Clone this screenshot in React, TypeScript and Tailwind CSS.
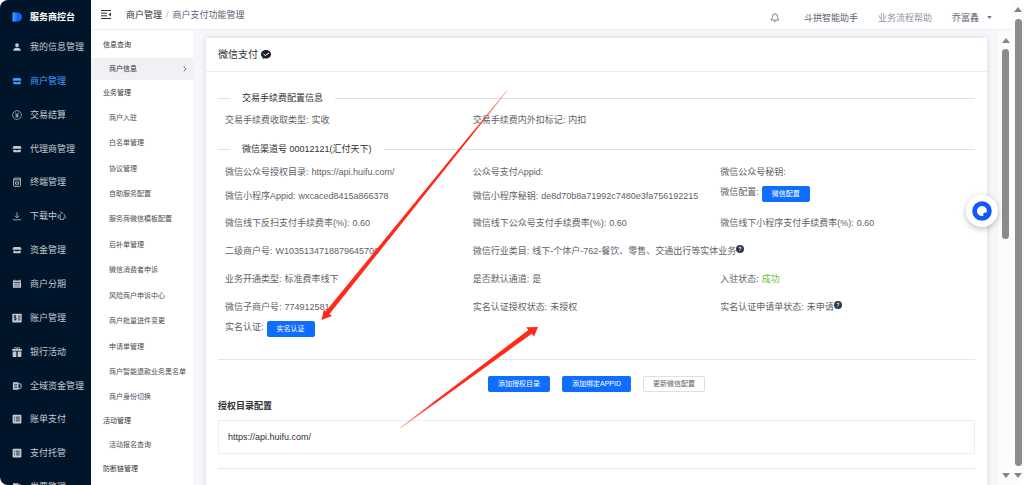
import type { ReactNode } from 'react';
import { BsGiftFill, BsPersonFill, BsQuestionCircleFill } from 'react-icons/bs';
import { Bell, ChevronRight } from 'lucide-react';

function ShopIcon() {
  return (
    <svg viewBox="0 0 16 16" className="w-2.5 h-2.5" fill="currentColor">
      <path d="M4 3h8a3 3 0 0 1 3 3v1.500H1V6a3 3 0 0 1 3-3z" />
      <path d="M2 9h3l1.500 1h3L11 9h3v3a1 1 0 0 1-1 1H3a1 1 0 0 1-1-1z" />
    </svg>
  );
}

function YuanIcon() {
  return (
    <svg viewBox="0 0 16 16" className="w-2.5 h-2.5" fill="none" stroke="currentColor" strokeWidth="1.1">
      <circle cx="8" cy="8" r="7" />
      <path d="m5 4 3 4 3-4M8 8v4.500M5.200 8.200h5.600M5.200 10.300h5.600" />
    </svg>
  );
}

function TerminalIcon() {
  return (
    <svg viewBox="0 0 16 16" className="w-2.5 h-2.5" fill="none" stroke="currentColor" strokeWidth="1.4">
      <path d="M2.500 4.500h11v9A1.500 1.500 0 0 1 12 15H4a1.500 1.500 0 0 1-1.500-1.500zM2.500 4.500 4 1.700h9.500v2.800M5.500 8h5v3.500h-5z" />
    </svg>
  );
}

function DownloadIcon() {
  return (
    <svg viewBox="0 0 16 16" className="w-2.5 h-2.5" fill="none" stroke="currentColor" strokeWidth="1.2">
      <path d="M8 2v9M4.500 7.500 8 11l3.500-3.500M1.500 14h13" />
    </svg>
  );
}

function CalendarIcon() {
  return (
    <svg viewBox="0 0 16 16" className="w-2.5 h-2.5">
      <path d="M1.500 2.500h13V14h-13z" fill="currentColor" />
      <path d="M2.500 5.500h11M4 8.200h2M7 8.200h2M10 8.200h2M4 11h2M7 11h2M10 11h2" stroke="#001529" strokeWidth="1.1" />
      <path d="M4.500 1v3M11.500 1v3" stroke="currentColor" strokeWidth="1.300" />
    </svg>
  );
}

function AccountIcon() {
  return (
    <svg viewBox="0 0 16 16" className="w-2.5 h-2.5">
      <rect x="0.5" y="1" width="15" height="14" rx="1" fill="currentColor" />
      <path d="M6.500 4.500h-3v3h3v3h-3M5 3v9.500M9.500 5h4M9.500 8h4M9.500 11h4" fill="none" stroke="#001529" strokeWidth="1.2" />
    </svg>
  );
}

function FundsIcon() {
  return (
    <svg viewBox="0 0 16 16" className="w-2.5 h-2.5">
      <path d="M1.500 2h9v12h-9z" fill="currentColor" />
      <path d="M10.500 4.500h3a1 1 0 0 1 1 1V10a2 2 0 0 1-2 2h-2" fill="none" stroke="currentColor" strokeWidth="1.6" />
      <path d="M3.500 5.500h5M3.500 8h5M3.500 10.500h5" stroke="#001529" />
    </svg>
  );
}

function BillIcon() {
  return (
    <svg viewBox="0 0 16 16" className="w-2.5 h-2.5">
      <rect x="1" y="1" width="14" height="14" rx="1.5" fill="currentColor" />
      <path d="M3.500 5H5M6.500 5h6M3.500 8H5M6.500 8h6M3.500 11H5M6.500 11h6" stroke="#001529" strokeWidth="1.3" />
    </svg>
  );
}

function LogoIcon() {
  return (
    <svg viewBox="0 0 20 20" className="w-2.5 h-2.5">
      <path d="M1 1h5v18H1z" fill="#38a3ff" />
      <path d="M4 1h7a9 9 0 0 1 0 18H6l5-9z" fill="#1463ff" />
      <path d="M4 1h3l4 9-4 9H4z" fill="#1f86ff" />
    </svg>
  );
}

function Triangle({ down = false }: { down?: boolean }) {
  return (
    <svg viewBox="0 0 8 5" className="w-2 h-[5px] shrink-0" fill="#858585">
      <path d={down ? 'M0 0h8L4 5z' : 'M0 5h8L4 0z'} />
    </svg>
  );
}

const mainNav: { label: string; icon: ReactNode; active?: boolean }[] = [
  { label: '我的信息管理', icon: <BsPersonFill className="w-2.5 h-2.5" /> },
  { label: '商户管理', icon: <ShopIcon />, active: true },
  { label: '交易结算', icon: <YuanIcon /> },
  { label: '代理商管理', icon: <ShopIcon /> },
  { label: '终端管理', icon: <TerminalIcon /> },
  { label: '下载中心', icon: <DownloadIcon /> },
  { label: '资金管理', icon: <ShopIcon /> },
  { label: '商户分期', icon: <CalendarIcon /> },
  { label: '账户管理', icon: <AccountIcon /> },
  { label: '银行活动', icon: <BsGiftFill className="w-2.5 h-2.5" /> },
  { label: '全域资金管理', icon: <FundsIcon /> },
  { label: '账单支付', icon: <BillIcon /> },
  { label: '支付托管', icon: <BillIcon /> },
  { label: '发票管理', icon: <FundsIcon /> },
];

const businessNav = [
  '商户入驻',
  '白名单管理',
  '协议管理',
  '自助服务配置',
  '服务商微信模板配置',
  '后补单管理',
  '微信消费者申诉',
  '风险商户申诉中心',
  '商户批量进件变更',
  '申请单管理',
  '商户智能退款业务黑名单',
  '商户身份切换',
];

function Sidebar() {
  return (
    <aside className="w-[91px] shrink-0 bg-[#001529] text-[#c3cad2] text-[9px] leading-3">
      <div className="flex items-center gap-2 h-[30px] pl-3 pt-1 font-bold text-white">
        <LogoIcon />
        <span>服务商控台</span>
      </div>
      <nav className="flex flex-col h-[474px]">
        {mainNav.map((item) => (
          <a
            key={item.label}
            href="#"
            className={`flex flex-1 items-center gap-2 pl-3 whitespace-nowrap ${item.active ? 'text-[#409eff]' : ''}`}
          >
            {item.icon}
            {item.label}
          </a>
        ))}
      </nav>
    </aside>
  );
}

function SubNav() {
  return (
    <aside className="w-[102px] shrink-0 bg-white text-[#303133] text-[7px] leading-[10px] whitespace-nowrap">
      <h2 className="flex items-center h-7 pl-3 pt-0.5">信息查询</h2>
      <a href="#" className="flex items-center justify-between h-[22px] pl-[18px] pr-1 bg-[#f0f0f5]">
        商户信息
        <ChevronRight className="w-2 h-2" />
      </a>
      <h2 className="flex items-center h-[25px] pl-3">业务管理</h2>
      <nav className="flex flex-col h-[305px] text-[#4a4c50]">
        {businessNav.map((label) => (
          <a key={label} href="#" className="flex flex-1 items-center pl-[18px]">
            {label}
          </a>
        ))}
      </nav>
      <h2 className="flex items-center h-[22px] pl-3">活动管理</h2>
      <a href="#" className="flex items-center h-[26px] pl-[18px] text-[#4a4c50]">
        活动报名查询
      </a>
      <h2 className="flex items-center h-[22px] pl-3">防断链管理</h2>
    </aside>
  );
}

function Header() {
  return (
    <header className="flex items-center justify-between h-[30px] pl-[10px] pr-5 bg-white border-b border-[#ebeef2] text-[9px] leading-3 text-[#5a6272] whitespace-nowrap">
      <div className="flex items-center">
        <button aria-label="收起菜单">
          <svg viewBox="0 0 20 18" className="w-2.5 h-[9px]" fill="none" stroke="#303133" strokeWidth="2">
            <path d="M0 1h20M0 6.300h12M0 11.600h12M0 17h20" />
            <path d="M20 5v8l-5-4z" fill="#303133" stroke="none" />
          </svg>
        </button>
        <nav className="flex gap-1 pl-[15px]">
          <a href="#" className="text-[#303133]">商户管理</a>
          <span className="text-[#b0b4bc]">/</span>
          <a href="#">商户支付功能管理</a>
        </nav>
      </div>
      <div className="flex items-center pt-1.5">
        <button aria-label="通知">
          <Bell className="w-2.5 h-2.5" />
        </button>
        <a href="#" className="pl-6">斗拱智能助手</a>
        <a href="#" className="pl-5 text-[#8c93a3]">业务流程帮助</a>
        <button className="flex items-center gap-2 pl-5">
          乔富鑫
          <svg viewBox="0 0 6 4" className="w-[5px] h-[3px]" fill="#6b7486">
            <path d="M0 0h6L3 4z" />
          </svg>
        </button>
      </div>
    </header>
  );
}

function SectionTitle({ children }: { children: ReactNode }) {
  return (
    <h3 className="flex items-center gap-3 h-4 text-[9px] leading-3 text-[#303133] whitespace-nowrap">
      <span className="w-3 h-px bg-[#dcdfe6]" />
      {children}
      <span className="flex-1 h-px bg-[#dcdfe6]" />
    </h3>
  );
}

function Field({ label, children, help = false }: { label: string; children?: ReactNode; help?: boolean }) {
  return (
    <div className="flex items-center gap-[3px]">
      <span>{label}:</span>
      <span className="flex">
        {children}
        {help && <BsQuestionCircleFill className="w-2 h-2 text-[#303a4a]" />}
      </span>
    </div>
  );
}

function PrimaryButton({ children }: { children: ReactNode }) {
  return (
    <button className="h-4 px-2.5 rounded-xs bg-[#0f6eff] text-white text-[7px] leading-3">{children}</button>
  );
}

function ButtonField({ label, button }: { label: string; button: string }) {
  return (
    <div className="flex items-start gap-[3px]">
      <span>{label}:</span>
      <PrimaryButton>{button}</PrimaryButton>
    </div>
  );
}

function ConfigCard() {
  return (
    <section className="h-[600px] bg-white rounded-xs shadow-[0_0_6px_rgba(0,0,0,0.12)]">
      <h2 className="flex items-center gap-[3px] h-[34px] px-3 border-b border-[#ebeef2] text-[10px] leading-3 text-[#303133]">
        微信支付
        <svg viewBox="0 0 20 18" className="w-2.5 h-[9px]">
          <path d="M10 0c5.500 0 10 3.800 10 8.500S15.500 17 10 17c-1 0-2-.1-3-.4L3.500 18v-3C1.300 13.500 0 11.200 0 8.500 0 3.800 4.500 0 10 0z" fill="#1d2129" />
          <path d="m5 8 3.500 3L16 6" fill="none" stroke="#fff" strokeWidth="2" />
        </svg>
      </h2>
      <div className="px-3 pt-[18px]">
        <SectionTitle>交易手续费配置信息</SectionTitle>
        <div className="grid grid-cols-3 h-7 px-[7px] text-[9px] leading-3 text-[#606266] whitespace-nowrap">
          <Field label="交易手续费收取类型">实收</Field>
          <Field label="交易手续费内外扣标记">内扣</Field>
        </div>
        <div className="pt-[7px]">
          <SectionTitle>微信渠道号 00012121(汇付天下)</SectionTitle>
        </div>
        <div className="px-[7px] pt-1 text-[9px] leading-3 text-[#606266] whitespace-nowrap">
          <div className="grid grid-cols-3 h-[22px]">
            <Field label="微信公众号授权目录">https://api.huifu.com/</Field>
            <Field label="公众号支付Appid" />
            <Field label="微信公众号秘钥" />
          </div>
          <div className="grid grid-cols-3 h-[26px]">
            <Field label="微信小程序Appid">wxcaced8415a866378</Field>
            <Field label="微信小程序秘钥">de8d70b8a71992c7480e3fa756192215</Field>
            <div className="pt-[3px]">
              <ButtonField label="微信配置" button="微信配置" />
            </div>
          </div>
          <div className="grid grid-cols-3 auto-rows-[28px]">
            <Field label="微信线下反扫支付手续费率(%)">0.60</Field>
            <Field label="微信线下公众号支付手续费率(%)">0.60</Field>
            <Field label="微信线下小程序支付手续费率(%)">0.60</Field>
            <Field label="二级商户号">W1035134718879645706</Field>
            <Field label="微信行业类目" help>线下-个体户-762-餐饮、零售、交通出行等实体业务</Field>
            <span />
            <Field label="业务开通类型">标准费率线下</Field>
            <Field label="是否默认通道">是</Field>
            <Field label="入驻状态">
              <span className="text-[#67c23a]">成功</span>
            </Field>
            <Field label="微信子商户号">774912581</Field>
            <Field label="实名认证授权状态">未授权</Field>
            <Field label="实名认证申请单状态" help>未申请</Field>
          </div>
          <ButtonField label="实名认证" button="实名认证" />
        </div>
        <hr className="mt-[22px] border-[#e4e7ed]" />
        <div className="flex justify-center gap-3 pt-4">
          <PrimaryButton>添加授权目录</PrimaryButton>
          <PrimaryButton>添加绑定APPID</PrimaryButton>
          <button className="h-4 px-[9px] rounded-xs border border-[#dcdfe6] text-[#606266] text-[7px] leading-3">
            更新微信配置
          </button>
        </div>
        <h3 className="pt-1.5 text-[9px] leading-4 font-bold text-[#303133]">授权目录配置</h3>
        <table className="w-full mt-1.5 border border-[#ebeef5] text-[9px] leading-3 text-[#303133]">
          <tbody>
            <tr>
              <td className="px-[9px] py-2.5">https://api.huifu.com/</td>
            </tr>
          </tbody>
        </table>
        <hr className="mt-[14px] border-[#e4e7ed]" />
      </div>
    </section>
  );
}

// Hand-drawn pointers laid over the form
function Arrows() {
  return (
    <svg viewBox="0 0 1024 485" className="absolute left-0 top-0 w-[1024px] h-[485px] pointer-events-none">
      <defs>
        <linearGradient id="fadeDown" gradientUnits="userSpaceOnUse" x1="507" y1="91" x2="470" y2="136">
          <stop offset="0" stopColor="#ff2a1a" stopOpacity="0.3" />
          <stop offset="1" stopColor="#ff2a1a" />
        </linearGradient>
        <linearGradient id="fadeUp" gradientUnits="userSpaceOnUse" x1="400" y1="428" x2="435" y2="402">
          <stop offset="0" stopColor="#ff2a1a" stopOpacity="0.3" />
          <stop offset="1" stopColor="#ff2a1a" />
        </linearGradient>
      </defs>
      <path d="M506.500 90.500 325.800 311.200l-2-1.500L321.500 320l10.500-4-2.500-2L507.300 91.200z" fill="url(#fadeDown)" />
      <path d="M400 427.500 528.300 330l-2-2.800L538 327l-4 9.500-2.200-2.800L400.700 428.300z" fill="url(#fadeUp)" />
    </svg>
  );
}

export default function App() {
  return (
    <div className="relative flex h-screen overflow-hidden rounded-lg bg-[#fcfcfc] font-['Liberation_Sans','Noto_Sans_CJK_SC',sans-serif]">
      <Sidebar />
      <div className="flex flex-col flex-1 min-w-0">
        <Header />
        <div className="flex flex-1 min-h-0">
          <SubNav />
          <main className="flex-1 min-w-0 overflow-hidden bg-[#f5f7fa] pl-[13px] pr-3 pt-2">
            <ConfigCard />
          </main>
          <div className="flex flex-col items-center justify-between w-[13px] pt-2 pb-[7px]">
            <div className="flex flex-col items-center gap-1.5">
              <Triangle />
              <span className="w-[7px] h-[190px] rounded-full bg-[#8b8b8b]" />
            </div>
            <Triangle down />
          </div>
        </div>
      </div>
      <div className="flex flex-col items-center gap-[7px] w-3 pt-[7px] pb-[7px]">
        <Triangle />
        <span className="flex-1 w-[7px] rounded-full bg-[#8b8b8b]" />
        <Triangle down />
      </div>
      <Arrows />
      <button
        aria-label="智能助手"
        className="absolute right-[26px] top-[195px] flex items-center justify-center w-8 h-8 rounded-full bg-white shadow-[0_2px_6px_rgba(0,0,0,0.25)]"
      >
        <svg viewBox="0 0 40 40" className="w-5 h-5">
          <circle cx="20" cy="20" r="19.500" fill="#1456ff" />
          <path d="M20 10a10 10 0 1 0 3 19.500c-2-4 0-7.500 6.500-6.500A10 10 0 0 0 20 10z" fill="#fff" />
        </svg>
      </button>
    </div>
  );
}
